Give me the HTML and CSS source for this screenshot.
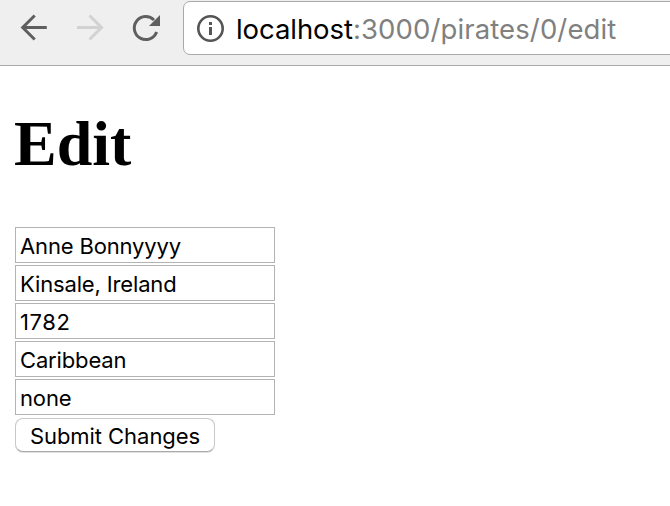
FILE: index.html
```
<!DOCTYPE html>
<html lang="en">
<head>
<meta charset="utf-8">
<title>Edit</title>
<link rel="stylesheet" href="styles.css">
</head>
<body>
<header class="toolbar">
  <svg class="nav" viewBox="0 0 36 36"><path class="stroke" d="M30.800 17.500H8M18.700 5.500l-12 12 12 12"/></svg>
  <svg class="nav disabled" viewBox="0 0 36 36"><path class="stroke" d="M5 17.500H28M17.500 5.500l12 12-12 12"/></svg>
  <svg class="nav" viewBox="0 0 36 36"><path class="stroke" d="M26 10A11.500 11.500 0 1 0 28.600 22"/><path class="tip" d="M32 5v11H21z"/></svg>
  <div class="address">
    <svg class="info" viewBox="0 0 28 28"><circle cx="14.500" cy="14.500" r="12.200"/><path class="mark" d="M14.500 13v8M14.500 8v3"/></svg>
    <span class="url"><span class="host">localhost</span>:3000/pirates/0/edit</span>
  </div>
</header>
<main>
  <h1>Edit</h1>
  <form>
    <input class="field" type="text" value="Anne Bonnyyyy">
    <input class="field" type="text" value="Kinsale, Ireland">
    <input class="field number" type="text" value="1782">
    <input class="field" type="text" value="Caribbean">
    <input class="field" type="text" value="none">
    <button class="submit" type="button">Submit Changes</button>
  </form>
</main>
</body>
</html>
```
FILE: styles.css
```
* { box-sizing: border-box; }
body { margin: 0; height: 506px; overflow: hidden; background: #fff; color: #000; }
.toolbar { height: 66px; display: flex; align-items: flex-start; padding-left: 16px; background: #efefef; border-bottom: 1px solid #a9a9a9; overflow: hidden; }
.nav { width: 36px; height: 36px; margin: 10px 20px 0 0; color: #5f5f5f; flex: none; }
.stroke { fill: none; stroke: currentColor; stroke-width: 3; }
.tip { fill: currentColor; }
.disabled { color: #d2d2d2; }
.address { flex: none; width: 520px; height: 54px; margin: 1px 0 0 -1px; display: flex; align-items: center; padding-left: 12px; background: #fff; border: 1px solid #a9a9a9; border-radius: 7px; }
.info { width: 28px; height: 28px; fill: none; stroke: #555; stroke-width: 2.6; overflow: visible; }
.mark { stroke-width: 3; }
.url { margin: 2px 0 0 12px; font: 27.5px/40px Inter, sans-serif; letter-spacing: 0.12px; color: #808080; white-space: nowrap; }
.host { color: #000; letter-spacing: -0.07px; }
main { padding: 0 15px; }
h1 { margin: 41px 0 46px -1px; font: bold 64px/74px "Liberation Serif", serif; }
form { display: flex; flex-direction: column; align-items: flex-start; gap: 2px; }
.field { width: 260px; height: 36px; margin: 0; padding: 2px 4px 0; border: 1px solid #b3b3b3; border-radius: 0; font: 22px Inter, sans-serif; letter-spacing: -0.15px; outline: 0; }
.number { letter-spacing: 0.6px; }
.submit { width: 200px; height: 34px; margin-top: 1px; padding: 1px 0 0; background: #fff; border: 1px solid #c8c8c8; border-bottom-color: #aaa; border-radius: 8px; box-shadow: 0 1px 0 #e2e2e2; color: #000; font: 22px/32px Inter, sans-serif; letter-spacing: -0.05px; }
```
